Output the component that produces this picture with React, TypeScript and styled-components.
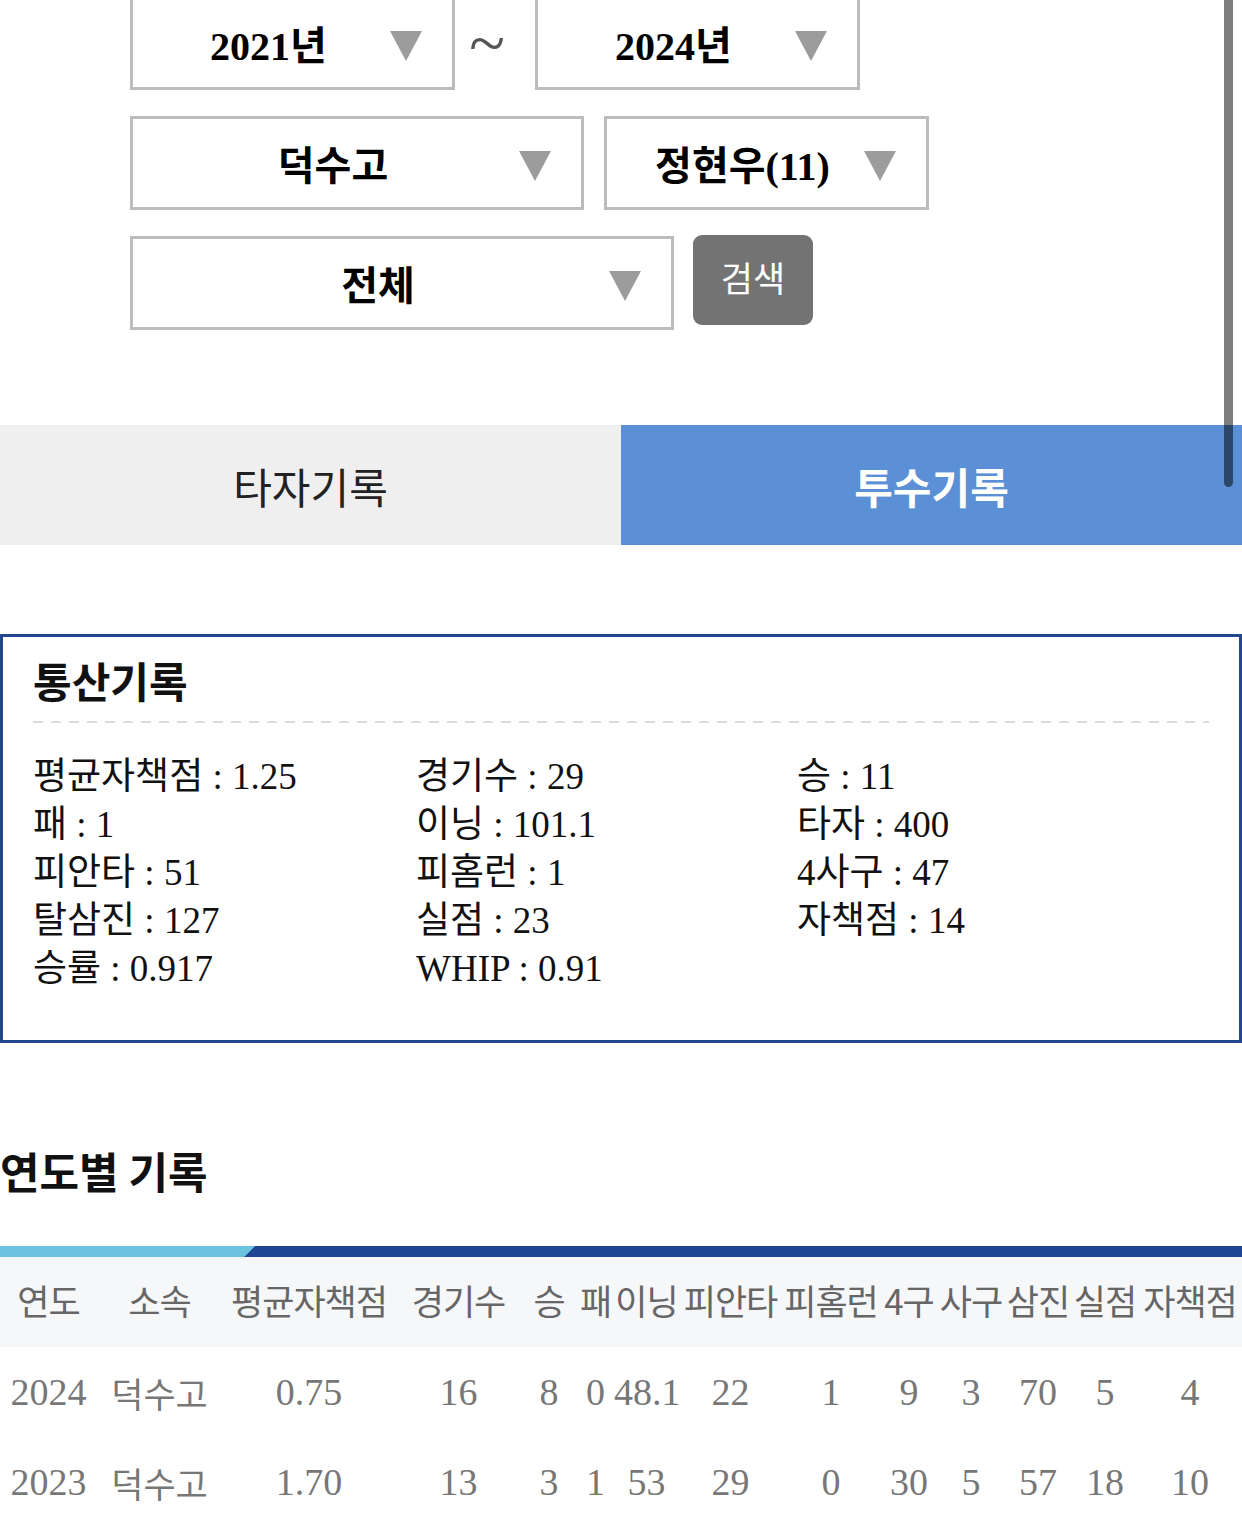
import React from 'react';
import styled, { createGlobalStyle } from 'styled-components';

const GlobalStyle = createGlobalStyle`
  html, body {
    margin: 0;
    padding: 0;
    background: #fff;
    overflow: hidden;
  }
  body {
    font-family: "Liberation Serif", "Noto Sans CJK KR", serif;
    color: #111;
  }
`;

const Page = styled.div`
  position: relative;
  width: 1242px;
  margin-top: -4px;
`;

const ScrollThumb = styled.div`
  position: fixed;
  top: 0;
  right: 9px;
  width: 9px;
  height: 487px;
  border-radius: 0 0 5px 5px;
  background: rgba(0, 0, 0, 0.5);
  z-index: 10;
`;

const Form = styled.div`
  display: flex;
  flex-direction: column;
  gap: 26px;
  padding-left: 130px;
`;

const FormRow = styled.div<{ gap: number }>`
  display: flex;
  align-items: flex-start;
  gap: ${props => props.gap}px;
`;

const SelectBox = styled.div<{ w: number }>`
  box-sizing: border-box;
  width: ${props => props.w}px;
  height: 94px;
  border: 3px solid #bcbcbc;
  background: #fff;
  display: flex;
  align-items: center;
`;

const SelectLabel = styled.span`
  flex: 1;
  padding-left: 14px;
  text-align: center;
  font-size: 40px;
  font-weight: 700;
  color: #000;
  white-space: nowrap;
`;

const Arrow = styled.span`
  width: 0;
  height: 0;
  margin: 6px 30px 0 0;
  border-left: 16px solid transparent;
  border-right: 16px solid transparent;
  border-top: 30px solid #9c9c9c;
`;

const Tilde = styled.div`
  width: 80px;
  height: 90px;
  display: flex;
  justify-content: center;
  padding: 14px 16px 0 0;
  box-sizing: border-box;
  font-family: "Liberation Serif", serif;
  font-size: 66px;
  line-height: 66px;
  color: #555;
`;

const SearchButton = styled.button`
  width: 120px;
  height: 90px;
  margin-top: -1px;
  border: 0;
  border-radius: 9px;
  background: #737373;
  color: #fff;
  font-family: "Noto Sans CJK KR", sans-serif;
  font-size: 35px;
  padding: 0 0 8px;
`;

const Tabs = styled.div`
  display: grid;
  grid-template-columns: 621px 1fr;
  height: 120px;
  margin-top: 95px;
`;

const Tab = styled.div<{ active?: boolean }>`
  display: flex;
  align-items: center;
  justify-content: center;
  background: ${props => (props.active ? '#5b8fd6' : '#efefef')};
  color: ${props => (props.active ? '#fff' : '#222')};
  font-family: "Noto Sans CJK KR", sans-serif;
  font-weight: ${props => (props.active ? 700 : 400)};
  font-size: 42px;
`;

const StatsBox = styled.section`
  margin-top: 89px;
  border: 3px solid #22478f;
  padding: 18px 30px 47px;
`;

const BoxTitle = styled.h2`
  margin: 0;
  font-family: "Noto Sans CJK KR", sans-serif;
  font-size: 42px;
  font-weight: 700;
  line-height: 50px;
  color: #111;
`;

const DashLine = styled.div`
  margin-top: 16px;
  height: 2px;
  background: repeating-linear-gradient(90deg, #dcdcdc 0 10px, transparent 10px 18px);
`;

const StatGrid = styled.div`
  margin-top: 30px;
  display: grid;
  grid-template-columns: 383px 381px 1fr;
`;

const Stat = styled.div`
  font-size: 37px;
  line-height: 48px;
  color: #111;
  white-space: nowrap;
`;

const SectionTitle = styled.h2`
  margin: 102px 0 0;
  font-family: "Noto Sans CJK KR", sans-serif;
  font-size: 43px;
  font-weight: 700;
  line-height: 50px;
  color: #111;
`;

const TableBar = styled.div`
  margin-top: 51px;
  height: 11px;
  background: linear-gradient(135deg, #6cc3df 180px, #1e4592 181px);
`;

const Table = styled.table`
  width: 1242px;
  table-layout: fixed;
  border-collapse: collapse;
`;

const HeadCell = styled.th`
  box-sizing: border-box;
  height: 90px;
  padding: 0 0 6px;
  background: #f6f7f9;
  color: #666;
  font-family: "Noto Sans CJK KR", sans-serif;
  font-size: 35px;
  font-weight: 400;
  letter-spacing: -1px;
  text-align: center;
  white-space: nowrap;
  overflow: visible;
`;

const Cell = styled.td<{ ko?: boolean }>`
  height: 90px;
  padding: 0;
  color: #777;
  font-size: ${props => (props.ko ? 35 : 38)}px;
  text-align: center;
  white-space: nowrap;
  overflow: visible;
`;

const colWidths = [97, 125, 174, 125, 56, 37, 65, 103, 98, 58, 66, 68, 66, 104];
const headers = ['연도', '소속', '평균자책점', '경기수', '승', '패', '이닝', '피안타', '피홈런', '4구', '사구', '삼진', '실점', '자책점'];
const rows = [
  ['2024', '덕수고', '0.75', '16', '8', '0', '48.1', '22', '1', '9', '3', '70', '5', '4'],
  ['2023', '덕수고', '1.70', '13', '3', '1', '53', '29', '0', '30', '5', '57', '18', '10'],
];

const stats = [
  '평균자책점 : 1.25', '경기수 : 29', '승 : 11',
  '패 : 1', '이닝 : 101.1', '타자 : 400',
  '피안타 : 51', '피홈런 : 1', '4사구 : 47',
  '탈삼진 : 127', '실점 : 23', '자책점 : 14',
  '승률 : 0.917', 'WHIP : 0.91',
];

function Select({ w, label }: { w: number; label: string }) {
  return (
    <SelectBox w={w}>
      <SelectLabel>{label}</SelectLabel>
      <Arrow />
    </SelectBox>
  );
}

export default function App() {
  return (
    <>
      <GlobalStyle />
      <ScrollThumb />
      <Page>
        <Form>
          <FormRow gap={0}>
            <Select w={325} label="2021년" />
            <Tilde>~</Tilde>
            <Select w={325} label="2024년" />
          </FormRow>
          <FormRow gap={20}>
            <Select w={454} label="덕수고" />
            <Select w={325} label="정현우(11)" />
          </FormRow>
          <FormRow gap={19}>
            <Select w={544} label="전체" />
            <SearchButton>검색</SearchButton>
          </FormRow>
        </Form>

        <Tabs>
          <Tab>타자기록</Tab>
          <Tab active>투수기록</Tab>
        </Tabs>

        <StatsBox>
          <BoxTitle>통산기록</BoxTitle>
          <DashLine />
          <StatGrid>
            {stats.map(s => (
              <Stat key={s}>{s}</Stat>
            ))}
          </StatGrid>
        </StatsBox>

        <SectionTitle>연도별 기록</SectionTitle>
        <TableBar />
        <Table>
          <colgroup>
            {colWidths.map((w, i) => (
              <col key={i} style={{ width: w }} />
            ))}
          </colgroup>
          <thead>
            <tr>
              {headers.map(h => (
                <HeadCell key={h}>{h}</HeadCell>
              ))}
            </tr>
          </thead>
          <tbody>
            {rows.map(r => (
              <tr key={r[0]}>
                {r.map((v, i) => (
                  <Cell key={i} ko={i === 1}>{v}</Cell>
                ))}
              </tr>
            ))}
          </tbody>
        </Table>
      </Page>
    </>
  );
}
